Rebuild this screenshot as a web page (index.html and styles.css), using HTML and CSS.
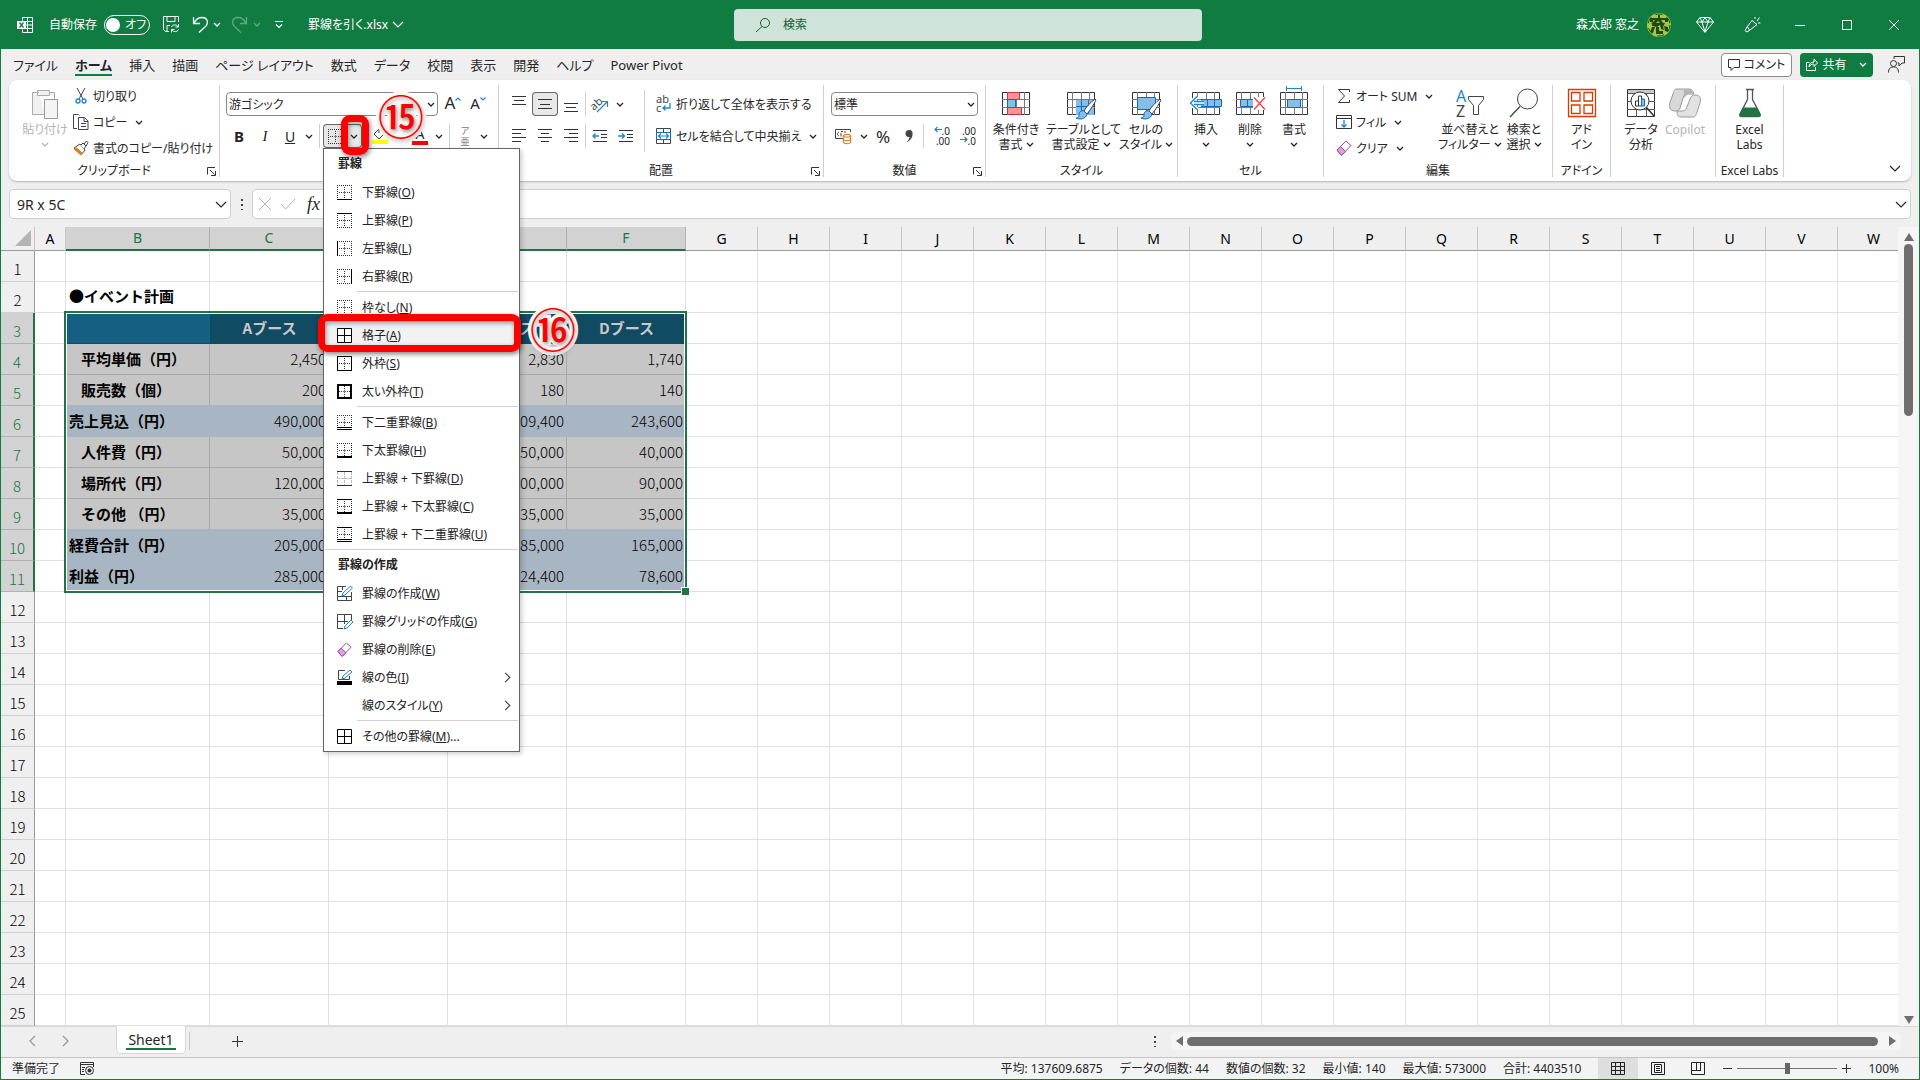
FILE: index.html
```html
<!DOCTYPE html>
<html lang="ja">
<head>
  <meta charset="UTF-8" />
  <meta name="viewport" content="width=device-width, initial-scale=1.0" />
  <title>罫線を引く.xlsx</title>
  <link rel="stylesheet" href="styles.css">
</head>
<body>
  <!-- Shared icon shapes -->
  <svg class="defs" aria-hidden="true">
    <symbol id="chev" viewBox="0 0 8 5"><path d="M1 1l3 3 3-3" fill="none" stroke="currentColor" stroke-width="1.3"/></symbol>
    <symbol id="chev-lg" viewBox="0 0 12 7"><path d="M1 1l5 5 5-5" fill="none" stroke="currentColor" stroke-width="1.2"/></symbol>
    <symbol id="launcher" viewBox="0 0 9 9"><path d="M.5 7.500V.5H8M3 3l4.500 4.500M8.500 4v4.500H4" fill="none" stroke="#333"/></symbol>
    <symbol id="dots" viewBox="0 0 15 15"><path d="M0 .5h15M0 14.500h15M.5 0v15M14.500 0v15M7.500 2v11M2 7.500h11" fill="none" stroke="#333" stroke-dasharray="1 1"/><path d="M6 7.500h3M7.500 6v3" stroke="#777"/></symbol>
    <symbol id="all" viewBox="0 0 15 15"><path d="M.5 .5h14v14H.5zM7.500 0v15M0 7.500h15" fill="#fff" stroke="#000"/></symbol>
    <symbol id="eraser" viewBox="0 0 16 16"><path d="M1 10L10 1l5 4.500-9 9.500h-1z" fill="#fff" stroke="#9b3fa5"/><path d="M1 10l3.500-3.500 5 5L6 15H5z" fill="#d9a3e0" stroke="#9b3fa5"/></symbol>
    <symbol id="brush" viewBox="0 0 20 22"><path d="M19 1C14 5 10 9 8 13l3 3c4-5 7-10 9-14z" fill="#fff" stroke="#444"/><path d="M8 13c-3-1-5 1-5 4 0 2-1 3-3 3 4 2 10 1 11-4z" fill="#83beec" stroke="#0f6cbd"/></symbol>
    <symbol id="cells" viewBox="0 0 28 23"><path d="M.5 .5h27v22H.5z" fill="#fff" stroke="#333"/><path d="M0 7.500h28M0 15.500h28M5.500 0v23M14.500 0v23M22.500 0v23" stroke="#777" fill="none"/></symbol>
  </svg>

  <div class="window">
    <!-- Title bar -->
    <header class="titlebar">
      <div class="quick">
        <svg class="app" width="16" height="16" viewBox="0 0 16 16"><path d="M5.500 3.500v-3h10v15h-10v-3M10.500 .5v15M5.500 4.500h10M9 8h6.500M5.500 11.500h10" fill="none" stroke="#fff"/><path d="M0 4h9v8H0z" fill="#fff"/><path d="M2.500 5.500l4 5M6.500 5.500l-4 5" stroke="#107c41" stroke-width="1.300"/></svg>
        <span class="autosave">自動保存</span>
        <button class="toggle"><i></i>オフ</button>
        <button class="save" aria-label="保存"><svg width="17" height="17" viewBox="0 0 17 17"><path d="M6 15.500H2.500l-2-2V.5h15V6M4 .5v5h8v-5M4 15V9.500h3M15.500 8v3h-3M8.500 16.500v-3h3M8.500 11c1-2.500 5-3 7 0M15.500 13.500c-1 2.500-5 3-7 0" fill="none" stroke="#fff"/></svg></button>
        <button class="undo" aria-label="元に戻す"><svg width="16" height="17" viewBox="0 0 16 17"><path d="M1.500 1v6.500H8M2 7C4 3 7 1.500 10 1.500c6 0 7 6 3 9.500l-6 5.500" fill="none" stroke="#fff" stroke-width="1.300"/></svg></button>
        <svg class="chev undo-chev"><use href="#chev"/></svg>
        <button class="redo" aria-label="やり直し"><svg width="16" height="17" viewBox="0 0 16 17"><path d="M14.500 1v6.500H8M14 7C12 3 9 1.500 6 1.500c-6 0-7 6-3 9.500l6 5.500" fill="none" stroke="#5faa80" stroke-width="1.300"/></svg></button>
        <svg class="chev redo-chev"><use href="#chev"/></svg>
        <svg class="customize" width="8" height="8" viewBox="0 0 8 8"><path d="M0 .5h8M1 3.500l3 3 3-3" fill="none" stroke="#fff" stroke-width="1.200"/></svg>
        <span class="filename">罫線を引く.xlsx</span>
        <svg class="chev-lg"><use href="#chev-lg"/></svg>
      </div>
      <label class="search">
        <svg width="16" height="16" viewBox="0 0 16 16"><circle cx="10" cy="6" r="4.500" fill="none" stroke="#0b6233"/><path d="M7 9.500L1 15" stroke="#0b6233"/></svg>
        <input type="text" placeholder="検索" aria-label="検索">
      </label>
      <div class="account">
        <span>森太郎 窓之</span>
        <svg class="avatar" width="24" height="24" viewBox="0 0 24 24"><circle cx="12" cy="12" r="12" fill="#a4c845"/><path d="M3 5h8V2h2v3h8v4h-3V7h-4l3 4-2 1-4-4-4 4-3-1 4-4H6v2H3zM5 14h3l-2 6-3-1zM9 14h3v4h4v3H9zM13 12l3 1 1 4-3-1zM17 13l4 1 0 5-3-1zM6 10l12 0-2 4-3-2-3 2-5-1z" fill="#1f4a14"/><circle cx="12" cy="12" r="11" fill="none" stroke="#1f4a14" stroke-dasharray="7 5"/></svg>
        <button class="caption-btn gem" aria-label="Premium"><svg width="18" height="16" viewBox="0 0 18 16"><path d="M4 .5h10L17.500 5 9 15.500.5 5zM.5 5h17M4 .5L6 5l3 10L12 5l2-4.500M6 5l3-4.500L12 5" fill="none" stroke="#fff"/></svg></button>
        <button class="caption-btn" aria-label="新機能"><svg width="17" height="17" viewBox="0 0 17 17"><path d="M8 4.500l5 4L6 14l-3 2-2-1.500L3 11zM3.500 11l2 3M11 3V1M13 5l2.500-3.500M14 7h2.500" fill="none" stroke="#fff"/></svg></button>
        <button class="caption-btn" aria-label="最小化"><svg width="12" height="12" viewBox="0 0 12 12"><path d="M1 6.500h10" stroke="#fff"/></svg></button>
        <button class="caption-btn" aria-label="元のサイズ"><svg width="12" height="12" viewBox="0 0 12 12"><path d="M1.500 1.500h9v9h-9z" fill="none" stroke="#fff"/></svg></button>
        <button class="caption-btn" aria-label="閉じる"><svg width="12" height="12" viewBox="0 0 12 12"><path d="M1 1l10 10M11 1L1 11" stroke="#fff"/></svg></button>
      </div>
    </header>

    <!-- Ribbon tabs -->
    <nav class="tabs">
      <a href="#">ファイル</a>
      <a href="#" class="active">ホーム</a>
      <a href="#">挿入</a>
      <a href="#">描画</a>
      <a href="#">ページ レイアウト</a>
      <a href="#">数式</a>
      <a href="#">データ</a>
      <a href="#">校閲</a>
      <a href="#">表示</a>
      <a href="#">開発</a>
      <a href="#">ヘルプ</a>
      <a href="#">Power Pivot</a>
      <div class="tab-actions">
        <button class="comment"><svg width="12" height="12" viewBox="0 0 12 12"><path d="M.5 .5h11v8H6l-3 3v-3H.5z" fill="none" stroke="#333"/></svg>コメント</button>
        <button class="share"><svg width="12" height="13" viewBox="0 0 12 13"><path d="M3.500 4.500h-3v8h9V9M3 9c0-3 2-5 5-5V1l3.500 4L8 8.500V6C6 6 4 7 3 9z" fill="none" stroke="#fff"/></svg>共有<svg class="chev"><use href="#chev"/></svg></button>
        <button aria-label="Teams"><svg width="17" height="17" viewBox="0 0 17 17"><circle cx="5.500" cy="7.500" r="3" fill="none" stroke="#333"/><path d="M.5 16.500c0-4 2-5.500 5-5.500s5 1.500 5 5.500M6 3V.5h10.500v6.500H14l-3 3V7H9.500" fill="none" stroke="#333"/></svg></button>
      </div>
    </nav>

    <!-- Ribbon -->
    <section class="ribbon">
      <div class="group clipboard">
        <div class="body">
          <button class="big disabled paste"><svg width="28" height="32" viewBox="0 0 28 32"><path d="M8 4.500H1.500v22H14M18 4.500h5.500V11M6.500 2.500h12v5h-12z" fill="#f0f0f0" stroke="#aaa"/><path d="M13.500 11.500h13v19h-13z" fill="#f4f4f4" stroke="#999"/></svg>貼り付け<svg class="chev"><use href="#chev"/></svg></button>
          <div class="stack">
            <button><svg width="16" height="16" viewBox="0 0 16 16"><path d="M4 0l6 11M12 0L6 11" stroke="#444"/><circle cx="5" cy="13" r="2" fill="none" stroke="#1a86d0" stroke-width="1.300"/><circle cx="11" cy="13" r="2" fill="none" stroke="#1a86d0" stroke-width="1.300"/></svg>切り取り</button>
            <button><svg width="16" height="16" viewBox="0 0 16 16"><path d="M4 14.500H.5V.5h5l1 1M5.500 3.500h6l3.500 3.500v8.500H5.500zM11 4v3.500h4M8 9.500h5M8 12.500h5" fill="none" stroke="#444"/></svg>コピー<svg class="chev"><use href="#chev"/></svg></button>
            <button><svg width="16" height="16" viewBox="0 0 16 16"><path d="M1 8l6-4 5 6-4 5z" fill="#fff" stroke="#444"/><path d="M1 9l3-1 5 5-1 2z" fill="#e8811a" stroke="#e8811a"/><path d="M8 5l2-2 3 3-2 3M11 4l2.500-3 1.500 1.500L13 6" fill="#fff" stroke="#444"/></svg>書式のコピー/貼り付け</button>
          </div>
        </div>
        <div class="caption">クリップボード<button aria-label="クリップボードの設定"><svg width="9" height="9"><use href="#launcher"/></svg></button></div>
      </div>

      <div class="group font">
        <div class="body rows">
          <div class="row">
            <div class="combo"><select aria-label="フォント"><option>游ゴシック</option></select><svg class="chev"><use href="#chev"/></svg></div>
            <button class="tool grow">A<svg width="6" height="4" viewBox="0 0 6 4"><path d="M.5 3.500L3 1l2.500 2.500" fill="none" stroke="#1a86d0" stroke-width="1.200"/></svg></button>
            <button class="tool grow shrink">A<svg width="6" height="4" viewBox="0 0 6 4"><path d="M.5 .5L3 3 5.500 .5" fill="none" stroke="#1a86d0" stroke-width="1.200"/></svg></button>
          </div>
          <div class="row">
            <button class="tool"><b>B</b></button>
            <button class="tool serif"><i>I</i></button>
            <button class="tool"><u>U</u></button>
            <button class="drop" aria-label="下線の種類"><svg class="chev"><use href="#chev"/></svg></button>
            <span class="sep"></span>
            <div class="borders">
              <button class="tool" aria-label="罫線"><svg width="15" height="15"><use href="#dots"/></svg></button>
              <button class="drop" aria-label="罫線メニュー"><svg class="chev"><use href="#chev"/></svg></button>

              <!-- Borders drop-down -->
              <div class="menu">
                <h3>罫線</h3>
                <button><svg viewBox="0 0 15 15"><use href="#dots"/><path d="M0 14.500h15" stroke="#000"/></svg>下罫線(<u>O</u>)</button>
                <button><svg viewBox="0 0 15 15"><use href="#dots"/><path d="M0 .5h15" stroke="#000"/></svg>上罫線(<u>P</u>)</button>
                <button><svg viewBox="0 0 15 15"><use href="#dots"/><path d="M.5 0v15" stroke="#000"/></svg>左罫線(<u>L</u>)</button>
                <button><svg viewBox="0 0 15 15"><use href="#dots"/><path d="M14.500 0v15" stroke="#000"/></svg>右罫線(<u>R</u>)</button>
                <hr class="indent">
                <button><svg viewBox="0 0 15 15"><use href="#dots"/></svg>枠なし(<u>N</u>)</button>
                <button class="hover"><svg viewBox="0 0 15 15"><use href="#all"/></svg>格子(<u>A</u>)<span class="mark item-mark"></span><span class="callout c16">⑯</span></button>
                <button><svg viewBox="0 0 15 15"><use href="#dots"/><path d="M.5 .5h14v14H.5z" fill="none" stroke="#000"/></svg>外枠(<u>S</u>)</button>
                <button><svg viewBox="0 0 15 15"><use href="#dots"/><path d="M1 1h13v13H1z" fill="none" stroke="#000" stroke-width="2"/></svg>太い外枠(<u>T</u>)</button>
                <hr class="indent">
                <button><svg viewBox="0 0 15 15"><use href="#dots"/><path d="M0 13.500h15" stroke="#fff"/><path d="M0 12.500h15M0 14.500h15" stroke="#000"/></svg>下二重罫線(<u>B</u>)</button>
                <button><svg viewBox="0 0 15 15"><use href="#dots"/><path d="M0 14h15" stroke="#000" stroke-width="2"/></svg>下太罫線(<u>H</u>)</button>
                <button><svg viewBox="0 0 15 15"><path d="M.5 1v13M14.500 1v13M7.500 1v13M0 7.500h15" stroke="#bbb" stroke-dasharray="3 1"/><path d="M0 .5h15M0 14.500h15" stroke="#333"/></svg>上罫線 + 下罫線(<u>D</u>)</button>
                <button><svg viewBox="0 0 15 15"><use href="#dots"/><path d="M0 .5h15" stroke="#000"/><path d="M0 14h15" stroke="#000" stroke-width="2"/></svg>上罫線 + 下太罫線(<u>C</u>)</button>
                <button><svg viewBox="0 0 15 15"><use href="#dots"/><path d="M0 13.500h15" stroke="#fff"/><path d="M0 .5h15M0 12.500h15M0 14.500h15" stroke="#000"/></svg>上罫線 + 下二重罫線(<u>U</u>)</button>
                <hr>
                <h3>罫線の作成</h3>
                <button><svg viewBox="0 0 15 15"><path d="M9 .5H.5v14h14V6M5.500 0v4M0 5.500h5M0 10.500h15M9.500 10v4" fill="none" stroke="#444"/><path d="M5 10l1-3 7.500-7 2 2-7.500 7z" fill="#fff" stroke="#1a86d0"/></svg>罫線の作成(<u>W</u>)</button>
                <button><svg viewBox="0 0 15 15"><path d="M6 14.500H.5V.5h14V6M7.500 0v10M0 7.500h11" fill="none" stroke="#444"/><path d="M7 15l1-3 6-6 2 2-6 6z" fill="#fff" stroke="#1a86d0"/></svg>罫線グリッドの作成(<u>G</u>)</button>
                <button><svg viewBox="0 0 15 15"><use href="#eraser"/></svg>罫線の削除(<u>E</u>)</button>
                <button><svg viewBox="0 0 15 15"><path d="M8 .5H1.500v9h11V6" fill="none" stroke="#444"/><path d="M5 9l1-3 7-6 2 2-7 6z" fill="#fff" stroke="#1a86d0"/><path d="M0 11h15v4H0z"/></svg>線の色(<u>I</u>)<em></em></button>
                <button><svg viewBox="0 0 15 15"></svg>線のスタイル(<u>Y</u>)<em></em></button>
                <hr class="indent">
                <button><svg viewBox="0 0 15 15"><use href="#all"/></svg>その他の罫線(<u>M</u>)...</button>
              </div>
              <span class="mark drop-mark"></span>
              <span class="callout c15">⑮</span>
            </div>
            <button class="tool fill" aria-label="塗りつぶしの色"><svg width="16" height="16" viewBox="0 0 16 16"><path d="M2 6l5-5 5 5-5 5zM7 1v4" fill="#fff" stroke="#444"/><path d="M12 3c3 1 3 3 2 5" fill="none" stroke="#1a86d0" stroke-width="1.500"/><path d="M0 12h16v4H0z" fill="#ff0"/></svg></button>
            <button class="drop" aria-label="塗りつぶしの色の一覧"><svg class="chev"><use href="#chev"/></svg></button>
            <button class="tool" aria-label="フォントの色"><span class="font-color">A</span></button>
            <button class="drop" aria-label="フォントの色の一覧"><svg class="chev"><use href="#chev"/></svg></button>
            <span class="sep"></span>
            <button class="tool ruby"><span>ア</span><span>亜</span></button>
            <button class="drop" aria-label="ふりがなの一覧"><svg class="chev"><use href="#chev"/></svg></button>
          </div>
        </div>
        <div class="caption">フォント</div>
      </div>

      <div class="group align">
        <div class="body">
          <div class="rows">
            <div class="row">
              <button class="tool" aria-label="上揃え"><svg width="16" height="16" viewBox="0 0 16 16"><path d="M1 .5h14M3 4.500h10M1 8.500h14" stroke="#333"/></svg></button>
              <button class="tool pressed" aria-label="上下中央揃え"><svg width="16" height="16" viewBox="0 0 16 16"><path d="M1 3.500h14M3 8.500h10M1 12.500h14" stroke="#333"/></svg></button>
              <button class="tool" aria-label="下揃え"><svg width="16" height="16" viewBox="0 0 16 16"><path d="M1 7.500h14M3 11.500h10M1 15.500h14" stroke="#333"/></svg></button>
              <span class="sep"></span>
              <button class="tool" aria-label="方向"><svg width="18" height="16" viewBox="0 0 18 16"><text x="-1" y="11" font-size="11" fill="#444" transform="rotate(-42 6 8)">ab</text><path d="M6 16L16 6M11 5.500h5.500V11" fill="none" stroke="#1a86d0" stroke-width="1.200"/></svg></button>
              <button class="drop" aria-label="方向の一覧"><svg class="chev"><use href="#chev"/></svg></button>
            </div>
            <div class="row">
              <button class="tool" aria-label="左揃え"><svg width="16" height="16" viewBox="0 0 16 16"><path d="M1 1.500h14M1 5.500h9M1 9.500h14M1 13.500h9" stroke="#333"/></svg></button>
              <button class="tool" aria-label="中央揃え"><svg width="16" height="16" viewBox="0 0 16 16"><path d="M1 1.500h14M4 5.500h8M1 9.500h14M4 13.500h8" stroke="#333"/></svg></button>
              <button class="tool" aria-label="右揃え"><svg width="16" height="16" viewBox="0 0 16 16"><path d="M1 1.500h14M6 5.500h9M1 9.500h14M6 13.500h9" stroke="#333"/></svg></button>
              <span class="sep"></span>
              <button class="tool" aria-label="インデントを減らす"><svg width="16" height="16" viewBox="0 0 16 16"><path d="M1 2.500h14M9 6.500h6M9 9.500h6M1 13.500h14" stroke="#333"/><path d="M7 8H1M3.500 5.500L1 8l2.500 2.500" fill="none" stroke="#1a86d0" stroke-width="1.300"/></svg></button>
              <button class="tool" aria-label="インデントを増やす"><svg width="16" height="16" viewBox="0 0 16 16"><path d="M1 2.500h14M9 6.500h6M9 9.500h6M1 13.500h14" stroke="#333"/><path d="M0 8h6M4 5.500L6.500 8 4 10.500" fill="none" stroke="#1a86d0" stroke-width="1.300"/></svg></button>
            </div>
          </div>
          <div class="rows wrap-col">
            <button class="row"><svg width="16" height="18" viewBox="0 0 16 18"><text x="0" y="8" font-size="11" fill="#444">ab</text><text x="0" y="17" font-size="11" fill="#444">c</text><path d="M14 8v5H7M9.500 10.500L7 13l2.500 2.500" fill="none" stroke="#1a86d0" stroke-width="1.300"/></svg>折り返して全体を表示する</button>
            <button class="row"><svg width="16" height="16" viewBox="0 0 16 16"><path d="M.5 .5h14v15H.5zM7.500 0v4M7.500 12v4" fill="none" stroke="#444"/><path d="M.5 4.500h14v7H.5z" fill="#fff" stroke="#0f6cbd"/><path d="M2.500 8h10M5 5.500L2.500 8 5 10.500M10 5.500L12.500 8 10 10.500" fill="none" stroke="#1a86d0" stroke-width="1.200"/></svg>セルを結合して中央揃え<svg class="chev"><use href="#chev"/></svg></button>
          </div>
        </div>
        <div class="caption">配置<button aria-label="配置の設定"><svg width="9" height="9"><use href="#launcher"/></svg></button></div>
      </div>

      <div class="group number">
        <div class="body rows">
          <div class="row">
            <div class="combo"><select aria-label="表示形式"><option>標準</option></select><svg class="chev"><use href="#chev"/></svg></div>
          </div>
          <div class="row">
            <button class="tool" aria-label="通貨表示形式"><svg width="17" height="16" viewBox="0 0 17 16"><path d="M15.500 4V1.500H.5v9H8M4 4c-2 1-2 3 0 4M6 3.500h2M6 5v3.500M9 4h2" fill="none" stroke="#444"/><path d="M8.500 7.500v7c1 1.500 6 1.500 7 0v-7c-1-1.500-6-1.500-7 0zM8.500 8c1 1.500 6 1.500 7 0M8.500 11.500c1 1.500 6 1.500 7 0" fill="#fff" stroke="#e8811a" stroke-width="1.300"/></svg></button>
            <button class="drop" aria-label="通貨の一覧"><svg class="chev"><use href="#chev"/></svg></button>
            <button class="tool percent">%</button>
            <button class="tool" aria-label="桁区切り"><svg width="10" height="14" viewBox="0 0 10 14"><path d="M5 1c3 0 4 2 3.500 5C8 10 5 12.500 2.500 13c2-2 3-3 3-5C3 8.500 1.500 7 1.500 4.500 1.500 2.500 3 1 5 1z" fill="#444"/></svg></button>
            <span class="sep"></span>
            <button class="tool decimal"><span><svg width="8" height="7" viewBox="0 0 8 7"><path d="M8 3.500H1M3.500 1L1 3.500 3.500 6" fill="none" stroke="#1a86d0" stroke-width="1.200"/></svg>.0</span><span>.00</span></button>
            <button class="tool decimal"><span>.00</span><span><svg width="8" height="7" viewBox="0 0 8 7"><path d="M0 3.500h7M4.500 1L7 3.500 4.500 6" fill="none" stroke="#1a86d0" stroke-width="1.200"/></svg>.0</span></button>
          </div>
        </div>
        <div class="caption">数値<button aria-label="数値の設定"><svg width="9" height="9"><use href="#launcher"/></svg></button></div>
      </div>

      <div class="group style">
        <div class="body">
          <button class="big mid"><svg width="32" height="32" viewBox="0 -3 32 32"><use href="#cells" x="2" y="1" width="28" height="23"/><path d="M7.500 1.500h12v7h-12zM7.500 16.500h14v7h-14z" fill="#ff9094" stroke="#d13438"/><path d="M7.500 8.500h8v8h-8z" fill="#83beec" stroke="#0f6cbd"/></svg>条件付き<br>書式 <svg class="chev"><use href="#chev"/></svg></button>
          <button class="big wider"><svg width="32" height="32" viewBox="0 -3 32 32"><use href="#cells" x="2" y="1" width="28" height="23"/><path d="M11 9h18v15H11z" fill="#83beec"/><path d="M11 15.500h18M16.500 9v14M23.500 9v14" stroke="#0f6cbd"/><use href="#brush" x="10" y="7" width="22" height="22"/></svg>テーブルとして<br>書式設定 <svg class="chev"><use href="#chev"/></svg></button>
          <button class="big mid"><svg width="32" height="32" viewBox="0 -3 32 32"><use href="#cells" x="2" y="1" width="28" height="23"/><path d="M7.500 6.500h18v12h-18z" fill="#83beec" stroke="#0f6cbd"/><use href="#brush" x="10" y="7" width="22" height="22"/></svg>セルの<br>スタイル <svg class="chev"><use href="#chev"/></svg></button>
        </div>
        <div class="caption">スタイル</div>
      </div>

      <div class="group cells">
        <div class="body">
          <button class="big"><svg width="34" height="32" viewBox="0 -3 34 32"><use href="#cells" x="3" y="1" width="28" height="23"/><path d="M12 8.500h20.500v7H12M18.500 8v8M25.500 8v8" fill="#83beec" stroke="#0f6cbd"/><path d="M15 12H2M8 5.500L1.500 12 8 18.500" fill="none" stroke="#fff" stroke-width="4"/><path d="M15 10.500H5M15 13.500H5M8 5.500L1.500 12 8 18.500" fill="none" stroke="#1a86d0" stroke-width="1.300"/></svg>挿入<br><svg class="chev"><use href="#chev"/></svg></button>
          <button class="big"><svg width="32" height="32" viewBox="0 -3 32 32"><use href="#cells" x="2" y="1" width="28" height="23"/><path d="M6.500 8.500h14v7h-14zM13.500 8v8" fill="#83beec" stroke="#0f6cbd"/><path d="M19 6h13v13H19z" fill="#fff"/><path d="M20 6.500l11 12M31 6.500l-11 12" stroke="#f0484d" stroke-width="1.400"/></svg>削除<br><svg class="chev"><use href="#chev"/></svg></button>
          <button class="big"><svg width="32" height="32" viewBox="0 -3 32 32"><use href="#cells" x="2" y="1" width="28" height="23"/><path d="M9.500 8.500h13v8h-13z" fill="#83beec" stroke="#0f6cbd"/><path d="M8 -2.500h15M8.500 -5v5M23.500 -5v5" stroke="#1a86d0"/></svg>書式<br><svg class="chev"><use href="#chev"/></svg></button>
        </div>
        <div class="caption">セル</div>
      </div>

      <div class="group edit">
        <div class="body">
          <div class="stack">
            <button><svg width="16" height="16" viewBox="0 0 16 16"><path d="M13.500 4V1.500h-11L8.500 8l-6 6.500h11V12" fill="none" stroke="#333"/></svg>オート SUM<svg class="chev"><use href="#chev"/></svg></button>
            <button><svg width="16" height="16" viewBox="0 0 16 16"><path d="M.5 1.500h15v13H.5zM0 4.500h16" fill="none" stroke="#333"/><path d="M8 6v7M5.500 10.500L8 13l2.500-2.500" fill="none" stroke="#1a86d0" stroke-width="1.300"/></svg>フィル<svg class="chev"><use href="#chev"/></svg></button>
            <button><svg width="16" height="16"><use href="#eraser"/></svg>クリア<svg class="chev"><use href="#chev"/></svg></button>
          </div>
          <button class="big wide"><svg width="32" height="32" viewBox="0 0 32 32"><text x="2" y="14" font-size="16" fill="#1a86d0">A</text><text x="2" y="29" font-size="16" fill="#444">Z</text><path d="M14.500 8.500h15v3l-5 6v9h-5v-9l-5-6z" fill="#fff" stroke="#444"/></svg>並べ替えと<br>フィルター <svg class="chev"><use href="#chev"/></svg></button>
          <button class="big"><svg width="32" height="32" viewBox="0 0 32 32"><circle cx="19.500" cy="11" r="10" fill="#fafafa" stroke="#444"/><path d="M12 18.500L2 29" stroke="#444" stroke-width="1.300"/></svg>検索と<br>選択 <svg class="chev"><use href="#chev"/></svg></button>
        </div>
        <div class="caption">編集</div>
      </div>

      <div class="group addin">
        <div class="body">
          <button class="big"><svg width="28" height="32" viewBox="0 0 28 32"><path d="M.5 1.500h27v27H.5zM3.500 4.500h8.500v8.500H3.500zM16 4.500h8.500v8.500H16zM3.500 17h8.500v8.500H3.500zM16 17h8.500v8.500H16z" fill="none" stroke="#d83b01" stroke-width="1.300"/></svg>アド<br>イン</button>
        </div>
        <div class="caption">アドイン</div>
      </div>

      <div class="group analyze">
        <div class="body">
          <button class="big"><svg width="28" height="32" viewBox="0 0 28 32"><path d="M.5 1.500h27v27H.5z" fill="#fff" stroke="#333"/><path d="M1 2h26v3H1z" fill="#c8c8c8"/><path d="M0 5.500h28M0 13.500h28M0 21.500h28M9.500 5v24M19.500 5v24" stroke="#555"/><circle cx="13" cy="13" r="9" fill="#fff" stroke="#333"/><path d="M8.500 13v5h3v-5zM11.500 8v10h3V8z" fill="#fff" stroke="#333"/><path d="M14.500 11v7h3v-7z" fill="#83beec" stroke="#0f6cbd"/><path d="M19.500 19.500L27 28" stroke="#333" stroke-width="1.500"/></svg>データ<br>分析</button>
          <button class="big disabled"><svg width="32" height="32" viewBox="0 0 32 32"><path d="M8 1h12c3 0 4 2 5 5h-6c-3 0-4 1-5 4l-3 10c-1 3-3 3-5 3-6 0-6-5-5-9L4 6c1-4 2-5 4-5z" fill="#d8d8d8" stroke="#9a9a9a"/><path d="M24 29H12c-3 0-4-2-4-6h5c3 0 4-1 5-4l3-8c1-3 3-4 5-4 6 0 6 4 5 8l-3 9c-1 4-2 5-4 5z" fill="#e2e2e2" stroke="#9a9a9a"/><path d="M15 2l7 0 3 4h-6l-4 4z" fill="#b5b5b5"/></svg>Copilot</button>
        </div>
      </div>

      <div class="group labs">
        <div class="body">
          <button class="big"><svg width="28" height="32" viewBox="0 0 28 32"><path d="M10 1.500h8M11.500 1.500v10L4 26c-.5 2 0 2.500 2 2.500h16c2 0 2.500-.5 2-2.500l-7.500-14.500v-10" fill="#fff" stroke="#555" stroke-width="1.300"/><path d="M7 19.500h14l3.500 6.500c.5 2 0 2.500-2 2.500h-17c-2 0-2.500-.5-2-2.500z" fill="#217346"/></svg>Excel<br>Labs</button>
        </div>
        <div class="caption">Excel Labs</div>
      </div>
      <button class="collapse" aria-label="リボンを折りたたむ"><svg class="chev-lg"><use href="#chev-lg"/></svg></button>
    </section>

    <!-- Formula bar -->
    <div class="formula-bar">
      <div class="namebox"><input type="text" value="9R x 5C" aria-label="名前ボックス"><svg class="chev-lg"><use href="#chev-lg"/></svg></div>
      <span class="grip"></span>
      <div class="formula">
        <button aria-label="キャンセル"><svg width="12" height="12" viewBox="0 0 12 12"><path d="M0 0l12 12M12 0L0 12" stroke="#b0b0b0"/></svg></button>
        <button aria-label="入力"><svg width="16" height="12" viewBox="0 0 16 12"><path d="M1 6l4.500 5L15 1" fill="none" stroke="#b0b0b0"/></svg></button>
        <button class="fx">fx</button>
        <input type="text" aria-label="数式バー">
        <svg class="chev-lg"><use href="#chev-lg"/></svg>
      </div>
    </div>

    <!-- Worksheet -->
    <main class="sheet">
      <div class="viewport">
        <table class="grid" id="grid"></table>
      </div>
      <div class="vscroll"><i class="up"></i><span></span><i class="down"></i></div>
    </main>

    <!-- Sheet tabs -->
    <div class="sheet-tabs">
      <button class="nav" aria-label="前のシート"><svg width="7" height="10" viewBox="0 0 7 10"><path d="M6 0L1 5l5 5" fill="none" stroke="#999" stroke-width="1.300"/></svg></button>
      <button class="nav" aria-label="次のシート"><svg width="7" height="10" viewBox="0 0 7 10"><path d="M1 0l5 5-5 5" fill="none" stroke="#999" stroke-width="1.300"/></svg></button>
      <button class="sheet-tab"><span>Sheet1</span></button>
      <span class="tab-sep"></span>
      <button class="add" aria-label="新しいシート"><svg width="11" height="11" viewBox="0 0 11 11"><path d="M5.500 0v11M0 5.500h11" stroke="#333"/></svg></button>
      <span class="grip"></span>
      <div class="hscroll"><i class="left"></i><span></span><i class="right"></i></div>
    </div>

    <!-- Status bar -->
    <footer class="status">
      <span>準備完了</span>
      <svg width="15" height="14" viewBox="0 0 15 14"><path d="M5 12.500H.5V.5h13V5M0 2.500h14M2 5.500h3M2 7.500h2M2 9.500h2" fill="none" stroke="#333"/><circle cx="9.500" cy="8.500" r="4" fill="none" stroke="#333"/><circle cx="9.500" cy="8.500" r="2" fill="#333"/></svg>
      <div class="stats">
        <span>平均: 137609.6875</span>
        <span>データの個数: 44</span>
        <span>数値の個数: 32</span>
        <span>最小値: 140</span>
        <span>最大値: 573000</span>
        <span>合計: 4403510</span>
      </div>
      <button class="view on" aria-label="標準"><svg width="14" height="13" viewBox="0 0 14 13"><path d="M.5 .5h13v12H.5zM4.500 0v13M9.500 0v13M0 4.500h14M0 8.500h14" fill="none" stroke="#222"/></svg></button>
      <button class="view" aria-label="ページ レイアウト"><svg width="14" height="13" viewBox="0 0 14 13"><path d="M.5 .5h13v12H.5zM3.500 2.500h7v8h-7zM5 4.500h4M5 6.500h4M5 8.500h4" fill="none" stroke="#222"/></svg></button>
      <button class="view" aria-label="改ページ プレビュー"><svg width="14" height="13" viewBox="0 0 14 13"><path d="M.5 .5h13v12H.5zM5.500 0v8M9.500 0v8M0 8.500h10" fill="none" stroke="#222"/></svg></button>
      <button class="zoom-btn" aria-label="縮小"><svg width="9" height="9" viewBox="0 0 9 9"><path d="M0 4.500h9" stroke="#333"/></svg></button>
      <input class="zoom" type="range" min="0" max="100" value="50" aria-label="ズーム">
      <button class="zoom-btn" aria-label="拡大"><svg width="9" height="9" viewBox="0 0 9 9"><path d="M4.500 0v9M0 4.500h9" stroke="#333"/></svg></button>
      <span class="percent-label">100%</span>
    </footer>
  </div>
  <script src="script.js"></script>
</body>
</html>
```
FILE: styles.css
```css
* {
  box-sizing: border-box;
}
body {
  margin: 0;
  background: #efefef;
  color: #262626;
  font-family: "Noto Sans", "Noto Sans CJK JP", sans-serif;
  font-feature-settings: "palt";
  font-size: 12px;
  line-height: 15px;
}
button {
  display: inline-flex;
  align-items: center;
  justify-content: center;
  padding: 0;
  border: none;
  background: none;
  color: inherit;
  font: inherit;
  font-feature-settings: inherit;
  white-space: nowrap;
}
input, select {
  min-width: 0;
  border: none;
  outline: none;
  background: none;
  color: inherit;
  font: inherit;
  font-feature-settings: inherit;
}
svg {
  flex-shrink: 0;
  overflow: visible;
}
.defs {
  display: none;
}
.chev {
  width: 8px;
  height: 5px;
}
.chev-lg {
  width: 12px;
  height: 7px;
}
.window {
  display: flex;
  flex-direction: column;
  height: 100vh;
  border: 1px solid #107c41;
  border-top: none;
}

/* Title bar */
.titlebar {
  display: grid;
  grid-template-columns: minmax(0, 1fr) 468px minmax(0, 1fr);
  align-items: center;
  height: 49px;
  padding-left: 16px;
  background: #107c41;
  color: #fff;
}
.quick, .account {
  display: flex;
  align-items: center;
  white-space: nowrap;
}
.autosave {
  margin: 0 7px 0 16px;
}
.toggle {
  gap: 5px;
  width: 46px;
  height: 20px;
  padding-right: 2px;
  border: 1px solid #fff;
  border-radius: 10px;
}
.toggle i {
  width: 14px;
  height: 14px;
  border-radius: 50%;
  background: #fff;
}
.save {
  margin: 0 12px 0 13px;
}
.undo-chev {
  margin: 0 11px 0 5px;
}
.redo-chev {
  margin: 0 14px 0 5px;
  color: #5faa80;
}
.filename {
  margin: 0 4px 0 25px;
}
.search {
  display: flex;
  align-items: center;
  gap: 10px;
  height: 32px;
  padding-left: 21px;
  border-radius: 4px;
  background: #cfe3d8;
}
.search input::placeholder {
  color: #0b6233;
  opacity: 1;
}
.account {
  justify-content: flex-end;
  margin-right: 2px;
}
.avatar {
  margin: 0 10px 0 8px;
}
.caption-btn {
  width: 47px;
  height: 40px;
}
.caption-btn.gem {
  width: 48px;
}

/* Ribbon tabs */
.tabs {
  display: flex;
  align-items: center;
  gap: 17px;
  height: 31px;
  padding: 0 14px 0 12px;
}
.tabs a {
  padding: 4px 0 1px;
  border-bottom: 2px solid transparent;
  color: #262626;
  font-size: 13px;
  text-decoration: none;
  white-space: nowrap;
}
.tabs a.active {
  border-color: #107c41;
  font-weight: bold;
}
.tab-actions {
  display: flex;
  align-items: center;
  gap: 8px;
  margin-left: auto;
}
.comment, .share {
  gap: 4px;
  height: 24px;
  border-radius: 4px;
}
.comment {
  width: 71px;
  border: 1px solid #8a8a8a;
  background: #fff;
}
.share {
  width: 73px;
  margin-right: 7px;
  background: #107c41;
  color: #fff;
}
.share .chev {
  margin-left: 8px;
}

/* Ribbon */
.ribbon {
  display: flex;
  height: 101px;
  margin: 0 8px 8px;
  padding: 5px 0 4px;
  border-radius: 8px;
  background: #fff;
  box-shadow: 0 1px 2px rgba(0, 0, 0, 0.25);
}
.group {
  display: flex;
  flex-direction: column;
  border-right: 1px solid #d0d0d0;
}
.clipboard { width: 211px; }
.font { width: 279px; }
.align { width: 325px; }
.number { width: 162px; }
.style { width: 192px; }
.cells { width: 146px; }
.edit { width: 229px; }
.addin { width: 58px; }
.analyze { width: 105px; }
.labs { width: 68px; }
.body {
  display: flex;
  align-items: flex-start;
  height: 80px;
}
.caption {
  position: relative;
  line-height: 12px;
  text-align: center;
  white-space: nowrap;
}
.caption button {
  position: absolute;
  right: 3px;
  top: 2px;
}
.rows {
  display: flex;
  flex-direction: column;
  gap: 4px;
  padding-top: 5px;
}
.row {
  display: flex;
  align-items: center;
  height: 28px;
}
.stack {
  display: flex;
  flex-direction: column;
  gap: 4px;
}
.stack button {
  justify-content: flex-start;
  gap: 4px;
  height: 22px;
}
.stack button .chev {
  margin-left: 4px;
}
.big {
  display: block;
  width: 44px;
  padding-top: 3px;
  text-align: center;
}
.big > svg:first-child {
  display: block;
  margin: 0 auto 2px;
}
.big .chev {
  vertical-align: 2px;
}
.big.mid {
  width: 60px;
}
.big.wide {
  width: 64px;
}
.big.wider {
  width: 70px;
}
.big.disabled {
  color: #b4b4b4;
}
.big.paste {
  width: 56px;
}
.paste .chev {
  display: block;
  margin: 5px auto 0;
}
.clipboard .body {
  padding-left: 8px;
}
.cells .body {
  padding-left: 6px;
}
.addin .body, .labs .body {
  justify-content: center;
}
.analyze .body {
  padding-left: 8px;
}
.edit .stack {
  width: 114px;
  padding-left: 12px;
}
.number .rows, .align .rows {
  padding-left: 7px;
}
.tool {
  width: 24px;
  height: 24px;
  border-radius: 4px;
  font-size: 14px;
}
.tool b, .tool i {
  font-size: 15px;
}
.tool.serif {
  font-family: "Liberation Serif", serif;
}
.drop {
  width: 14px;
  height: 24px;
}
.sep {
  width: 1px;
  height: 24px;
  margin: 0 3px;
  background: #d0d0d0;
}
.combo {
  display: grid;
  width: 212px;
  height: 24px;
  margin-right: 2px;
  align-items: center;
  border: 1px solid #8a8a8a;
  border-radius: 4px;
}
.number .combo {
  width: 147px;
}
.combo select {
  grid-area: 1 / 1;
  width: 100%;
  padding: 0 2px;
  appearance: none;
}
.combo .chev {
  grid-area: 1 / 1;
  justify-self: end;
  margin-right: 2px;
}
.grow {
  align-items: flex-start;
  font-size: 17px;
  line-height: 22px;
}
.grow svg {
  margin-top: 5px;
}
.shrink {
  font-size: 15px;
}
.font .rows {
  padding-left: 6px;
}
.font .row > .tool:nth-child(-n+2) {
  width: 26px;
}
.borders {
  position: relative;
  display: flex;
  width: 39px;
  margin-right: 6px;
  border-radius: 4px;
  background: #e8e8e8;
  box-shadow: inset 0 0 0 1px #666;
}
.font-color {
  width: 16px;
  border-bottom: 4px solid #f00;
  line-height: 14px;
}
.ruby {
  flex-direction: column;
  color: #777;
  font-size: 9px;
  line-height: 11px;
}
.fill + .drop {
  margin-right: 2px;
}
.align .tool {
  width: 26px;
}
.align .sep {
  margin: 0 1px;
}
.pressed {
  background: #e8e8e8;
  box-shadow: inset 0 0 0 1px #666;
}
.align .wrap-col {
  margin: 5px 0 0 5px;
  padding: 0 0 2px 11px;
  border-left: 1px solid #d0d0d0;
}
.wrap-col .row {
  justify-content: flex-start;
  gap: 4px;
}
.wrap-col .chev {
  margin-left: 4px;
}
.percent {
  font-size: 17px;
}
.number .tool {
  margin-right: 2px;
}
.number .sep {
  margin: 0 2px 0 0;
}
.decimal {
  flex-direction: column;
  align-items: flex-end;
  font-size: 10px;
  line-height: 10px;
}
.decimal span {
  display: flex;
}
.collapse {
  margin: auto 10px 5px auto;
}

/* Borders menu */
.menu {
  position: absolute;
  top: 24px;
  left: 0;
  z-index: 5;
  width: 197px;
  padding-bottom: 1px;
  border: 1px solid #666;
  background: #fff;
  box-shadow: 2px 2px 5px rgba(0, 0, 0, 0.2);
  color: #222;
}
.menu h3 {
  margin: 0;
  padding-left: 14px;
  font-size: 12px;
  line-height: 28px;
}
.menu h3:first-child {
  padding-top: 1px;
}
.menu button {
  position: relative;
  display: flex;
  justify-content: flex-start;
  width: 100%;
  height: 28px;
  padding-left: 13px;
}
.menu button > svg {
  width: 15px;
  height: 15px;
  margin-right: 10px;
}
.menu hr {
  height: 3px;
  margin: 0 1px;
  border: 1px solid #fff;
  border-width: 1px 0;
  background: #d0d0d0;
}
.menu hr.indent {
  margin-left: 33px;
}
.menu em {
  width: 7px;
  height: 7px;
  margin: 0 10px 0 auto;
  border: solid #333;
  border-width: 1px 1px 0 0;
  transform: rotate(45deg);
}
.menu .hover {
  background: #f2f2f2;
}

/* Step markers */
.mark {
  position: absolute;
  z-index: 6;
  border: 7px solid #f00;
  border-radius: 9px;
  box-shadow: 1px 2px 5px rgba(0, 0, 0, 0.5), inset 1px 2px 5px rgba(0, 0, 0, 0.4);
}
.drop-mark {
  top: -9px;
  left: 18px;
  width: 28px;
  height: 40px;
}
.item-mark {
  top: -7px;
  left: -6px;
  width: 203px;
  height: 38px;
}
.callout {
  position: absolute;
  z-index: 7;
  color: #f00;
  font: 500 46px/46px "Noto Sans CJK JP", sans-serif;
  -webkit-text-stroke: 7px #fff;
  paint-order: stroke fill;
  text-shadow: 1px 2px 4px rgba(0, 0, 0, 0.5);
}
.c15 {
  top: -33px;
  left: 55px;
}
.c16 {
  top: -17px;
  left: 206px;
}

/* Formula bar */
.formula-bar {
  display: flex;
  height: 30px;
  margin: 0 8px 8px;
}
.namebox, .formula {
  display: flex;
  align-items: center;
  border: 1px solid #d0d0d0;
  border-radius: 4px;
  background: #fff;
}
.namebox {
  width: 222px;
  padding: 0 3px 0 5px;
  font-size: 14px;
}
.namebox input {
  flex: 1;
}
.grip {
  align-self: center;
  width: 2px;
  height: 11px;
  margin: 0 9px 0 10px;
  background: repeating-linear-gradient(#444 0 2px, transparent 2px 5px);
}
.formula {
  flex: 1;
  gap: 9px;
  padding: 0 3px 0 6px;
}
.formula input {
  flex: 1;
}
.fx {
  margin-left: 2px;
  font: italic 18px "Liberation Serif", serif;
}

/* Worksheet */
.sheet {
  display: flex;
  flex: 1;
  min-height: 0;
  background: #fff;
}
.viewport {
  flex: 1;
  min-width: 0;
  overflow: hidden;
}
.grid {
  width: 1909px;
  border-spacing: 0;
  table-layout: fixed;
  color: #000;
  font-family: "Noto Sans CJK JP", sans-serif;
  font-size: 15px;
}
.grid th, .grid td {
  height: 31px;
  padding: 0 2px 1px 3px;
  border: solid #e0e0e0;
  border-width: 0 1px 1px 0;
  white-space: nowrap;
}
.grid td {
  font-weight: 300;
  text-align: right;
}
.grid thead th {
  height: 24px;
  padding-right: 3px;
  border-color: #c6c6c6;
  border-bottom-color: #999;
  background: #efefef;
  font-family: "Noto Sans", sans-serif;
  font-size: 14px;
  font-weight: normal;
}
.grid tbody th {
  padding: 4px 0 0;
  border-color: #d0d0d0;
  border-right-color: #999;
  background: #efefef;
  font-weight: 300;
}
.grid thead th.on {
  border-color: #b0b0b0;
  border-bottom: 2px solid #217346;
  background: #d2d2d2;
  color: #217346;
}
.grid tbody th.on {
  border-color: #b0b0b0;
  border-right: 2px solid #217346;
  background: #d2d2d2;
  color: #217346;
}
.corner::after {
  content: "";
  display: block;
  width: 16px;
  height: 16px;
  margin-left: 11px;
  background: #b4b4b4;
  clip-path: polygon(100% 0, 100% 100%, 0 100%);
}
.grid td.label {
  font-weight: bold;
  font-feature-settings: normal;
  text-align: left;
}
.grid td.sub {
  padding-left: 15px;
}
.grid td.title {
  padding-bottom: 3px;
}
.grid .data td {
  border-color: #a9a9a9;
  background: #c6c6c6;
}
.grid .total td {
  border-color: #a8b5c2;
  background: #a8b5c2;
}
.grid .before-total td {
  border-bottom-color: #a8b5c2;
}
.grid .head td {
  border-color: #114a63;
  background: #114a63;
  color: #c8c8c8;
  font-weight: bold;
  font-feature-settings: normal;
  text-align: center;
}
.grid .head td.first {
  position: relative;
  border-right-color: #155f83;
  background: #155f83;
}
.grid tr td.plain {
  border-color: #e0e0e0;
  background: #fff;
}
.selection {
  position: absolute;
  top: -2px;
  left: -2px;
  z-index: 1;
  width: 623px;
  height: 282px;
  border: 2px solid #217346;
  box-shadow: inset 0 0 0 1px #fff;
}
.selection::after {
  content: "";
  position: absolute;
  right: -4px;
  bottom: -4px;
  width: 7px;
  height: 7px;
  border: solid #fff;
  border-width: 1px 0 0 1px;
  background: #217346;
}
.vscroll {
  display: flex;
  flex-direction: column;
  align-items: center;
  width: 21px;
  padding: 6px 0 2px;
  background: #f5f5f5;
}
.vscroll span {
  width: 9px;
  height: 172px;
  margin-top: 3px;
  border-radius: 5px;
  background: #6e6e6e;
}
.up, .down, .left, .right {
  border: 5px solid transparent;
}
.up {
  border-top-width: 0;
  border-bottom: 8px solid #6e6e6e;
}
.down {
  margin-top: auto;
  border-bottom-width: 0;
  border-top: 8px solid #6e6e6e;
}
.left {
  border-left-width: 0;
  border-right: 7px solid #6e6e6e;
}
.right {
  border-right-width: 0;
  border-left: 7px solid #6e6e6e;
}

/* Sheet tabs */
.sheet-tabs {
  display: flex;
  align-items: center;
  height: 32px;
  padding: 0 18px 2px 15px;
  border-top: 1px solid #d8d8d8;
  border-bottom: 1px solid #c4c4c4;
}
.nav {
  width: 33px;
}
.sheet-tab {
  align-self: flex-start;
  width: 70px;
  height: 28px;
  margin: -1px 3px 0 34px;
  border: 1px solid #d8d8d8;
  border-top: none;
  border-radius: 0 0 5px 5px;
  background: #fff;
  font-size: 14px;
}
.sheet-tab span {
  padding: 2px 2px 1px;
  border-bottom: 2px solid #107c41;
}
.tab-sep {
  width: 1px;
  height: 18px;
  margin-right: 42px;
  background: #c8c8c8;
}
.sheet-tabs .grip {
  margin: 0 15px 0 auto;
}
.hscroll {
  display: flex;
  align-items: center;
  justify-content: space-between;
  width: 730px;
  height: 18px;
  padding: 0 5px;
  border-radius: 6px;
  background: #f5f5f5;
}
.hscroll span {
  flex: 1;
  height: 9px;
  margin: 0 11px 0 4px;
  border-radius: 5px;
  background: #6e6e6e;
}

/* Status bar */
.status {
  display: flex;
  align-items: center;
  height: 21px;
  padding: 0 20px 0 11px;
  background: #f3f3f3;
  white-space: nowrap;
}
.status > svg {
  margin-left: 20px;
}
.stats {
  display: flex;
  gap: 17px;
  margin: 0 17px 0 auto;
}
.view {
  width: 40px;
  height: 21px;
}
.view.on {
  background: #dedede;
}
.zoom-btn {
  width: 9px;
  margin: 0 5px;
}
.zoom {
  width: 100px;
  height: 16px;
  margin: 0;
  appearance: none;
  background: linear-gradient(#777, #777) center / 100% 1px no-repeat;
}
.zoom::-webkit-slider-thumb {
  width: 5px;
  height: 11px;
  appearance: none;
  background: #666;
}
.percent-label {
  margin-left: 12px;
}
```
FILE: script.js
```js
// Builds the worksheet: 25 rows, columns A to W
const columns = "ABCDEFGHIJKLMNOPQRSTUVW".split("");
const widths = { A: 31, B: 144, C: 119, D: 119, E: 119, F: 119 };
const cells = {
  2: ["●イベント計画"],
  3: ["", "Aブース", "", "Cブース", "Dブース"],
  4: ["平均単価（円）", "2,450", "", "2,830", "1,740"],
  5: ["販売数（個）", "200", "", "180", "140"],
  6: ["売上見込（円）", "490,000", "", "509,400", "243,600"],
  7: ["人件費（円）", "50,000", "", "50,000", "40,000"],
  8: ["場所代（円）", "120,000", "", "100,000", "90,000"],
  9: ["その他 （円）", "35,000", "", "35,000", "35,000"],
  10: ["経費合計（円）", "205,000", "", "185,000", "165,000"],
  11: ["利益（円）", "285,000", "", "324,400", "78,600"]
};
const totals = [6, 10, 11];

function rowClass(row) {
  if (row === 3) return "head";
  if (row < 3 || row > 11) return "";
  if (totals.includes(row)) return "data total";
  return totals.includes(row + 1) ? "data before-total" : "data";
}

function cellHtml(row, i) {
  const text = (cells[row] || [])[i - 1] || "";
  let cls = "";
  if (i === 0 || i > 5) cls = "plain";
  else if (i === 1 && row === 3) return '<td class="first"><div class="selection"></div></td>';
  else if (i === 1 && text) {
    cls = "label";
    if (row === 2) cls += " title";
    else if (!totals.includes(row)) cls += " sub";
  }
  return `<td class="${cls}">${text}</td>`;
}

let html = "<colgroup><col style='width:34px'>";
columns.forEach(c => html += `<col style="width:${widths[c] || 72}px">`);
html += "</colgroup><thead><tr><th class='corner'></th>";
columns.forEach((c, i) => html += `<th class="${i > 0 && i < 6 ? "on" : ""}">${c}</th>`);
html += "</tr></thead><tbody>";
for (let row = 1; row <= 25; row++) {
  html += `<tr class="${rowClass(row)}"><th class="${row > 2 && row < 12 ? "on" : ""}">${row}</th>`;
  columns.forEach((c, i) => html += cellHtml(row, i));
  html += "</tr>";
}
document.getElementById("grid").innerHTML = html + "</tbody>";
```
